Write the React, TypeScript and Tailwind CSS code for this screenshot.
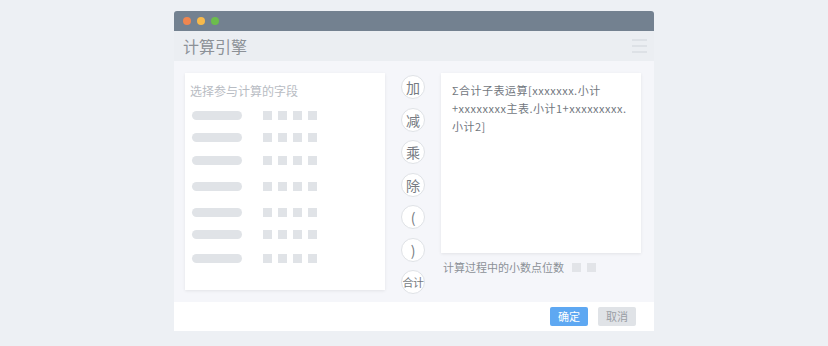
const font = { fontFamily: '"Noto Sans CJK SC", "Noto Sans", sans-serif' };

const rowTops = [0, 22, 44.5, 71, 97, 119, 143];

function FieldRow({ top }: { top: number }) {
  return (
    <div className="absolute left-[7px] flex items-center" style={{ top }}>
      <div className="h-[9px] w-[50px] rounded-full bg-[#e0e3e7]" />
      <div className="ml-[21px] flex gap-[6px]">
        <div className="h-[9px] w-[9px] bg-[#e0e3e7]" />
        <div className="h-[9px] w-[9px] bg-[#e0e3e7]" />
        <div className="h-[9px] w-[9px] bg-[#e0e3e7]" />
        <div className="h-[9px] w-[9px] bg-[#e0e3e7]" />
      </div>
    </div>
  );
}

const ops = ["加", "减", "乘", "除", "(", ")", "合计"];

export default function App() {
  return (
    <div className="h-[346px] w-[828px] bg-[#edf0f4] pt-[11px]" style={font}>
      <div className="mx-auto w-[480px]">
        {/* title bar */}
        <div className="flex h-[20px] items-center gap-[6px] rounded-t-[3px] bg-[#738190] pl-[9px]">
          <span className="h-[8px] w-[8px] rounded-full bg-[#f0864f]" />
          <span className="h-[8px] w-[8px] rounded-full bg-[#f7b94b]" />
          <span className="h-[8px] w-[8px] rounded-full bg-[#6cbd4c]" />
        </div>

        {/* header */}
        <div className="flex h-[30px] items-center justify-between bg-[#ebeef2] pl-[9px] pr-[7px]">
          <span className="text-[16px] leading-none text-[#8c9197]">计算引擎</span>
          <div className="flex w-[15px] flex-col gap-[4px]">
            <span className="h-[2px] bg-[#dde1e6]" />
            <span className="h-[2px] bg-[#dde1e6]" />
            <span className="h-[2px] bg-[#dde1e6]" />
          </div>
        </div>

        {/* body */}
        <div className="flex h-[241px] bg-[#f5f6fa] pl-[11px] pt-[12px]">
          <div className="h-[217px] w-[200px] shrink-0 bg-white shadow-[0_1px_3px_rgba(0,0,0,0.08)]">
            <div className="pl-[5px] pt-[10px] text-[12px] leading-[16px] text-[#b8bcc3]">选择参与计算的字段</div>
            <div className="relative mt-[12px]">
              {rowTops.map((t) => (
                <FieldRow key={t} top={t} />
              ))}
            </div>
          </div>

          <div className="ml-[16px] mt-[2px] flex w-[24px] shrink-0 flex-col gap-[8.5px]">
            {ops.map((o) => (
              <div
                key={o}
                className={
                  "flex h-[24px] w-[24px] shrink-0 items-center justify-center whitespace-nowrap rounded-full border border-[#dfe2e6] bg-white leading-none text-[#767b82] " +
                  (o === "合计" ? "text-[11px] tracking-[-0.5px]" : "text-[14px]")
                }
              >
                {o}
              </div>
            ))}
          </div>

          <div className="ml-[16px] flex shrink-0 flex-col">
            <div className="h-[180px] w-[200px] bg-white px-[11px] pt-[8px] text-[11px] leading-[18px] tracking-[0.5px] text-[#72777e] shadow-[0_1px_3px_rgba(0,0,0,0.08)]">
              <div className="whitespace-nowrap">Σ合计子表运算[xxxxxxx.小计</div>
              <div className="whitespace-nowrap">+xxxxxxxx主表.小计1+xxxxxxxxx.</div>
              <div>小计2]</div>
            </div>
            <div className="mt-[6px] flex items-center pl-[2px]">
              <span className="text-[11px] leading-[16px] text-[#8c9197]">计算过程中的小数点位数</span>
              <span className="ml-[8px] h-[9px] w-[9px] bg-[#e2e4e8]" />
              <span className="ml-[6px] h-[9px] w-[9px] bg-[#e2e4e8]" />
            </div>
          </div>
        </div>

        {/* footer */}
        <div className="flex h-[29px] items-center justify-end gap-[10px] bg-white pr-[18px]">
          <button className="h-[19px] w-[38px] rounded-[2px] bg-[#5ea8f2] text-[11px] leading-none text-white">确定</button>
          <button className="h-[19px] w-[38px] rounded-[2px] bg-[#e0e3e7] text-[11px] leading-none text-[#9a9ea4]">取消</button>
        </div>
      </div>
    </div>
  );
}
